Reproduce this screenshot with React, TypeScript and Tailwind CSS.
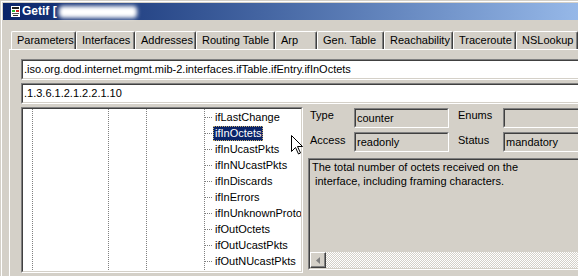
import React from 'react'

const TABS: { label: string; w: string }[] = [
  { label: 'Parameters', w: 'w-[65px]' },
  { label: 'Interfaces', w: 'w-[59px]' },
  { label: 'Addresses', w: 'w-[61px]' },
  { label: 'Routing Table', w: 'w-[79px]' },
  { label: 'Arp', w: 'w-[42px]' },
  { label: 'Gen. Table', w: 'w-[67px]' },
  { label: 'Reachability', w: 'w-[69px]' },
  { label: 'Traceroute', w: 'w-[63px]' },
  { label: 'NSLookup', w: 'w-[62px]' },
]

const NODES = [
  'ifLastChange',
  'ifInOctets',
  'ifInUcastPkts',
  'ifInNUcastPkts',
  'ifInDiscards',
  'ifInErrors',
  'ifInUnknownProtos',
  'ifOutOctets',
  'ifOutUcastPkts',
  'ifOutNUcastPkts',
]

const VDOTS = 'bg-[image:repeating-linear-gradient(to_bottom,#808080_0px_1px,transparent_1px_2px)] bg-[length:1px_100%] bg-no-repeat'

// sunken edit box, win2k style
function Sunken({ className = '', inner = '', children }: { className?: string; inner?: string; children?: React.ReactNode }) {
  return (
    <div className={`border border-[#808080] border-b-white border-r-white ${className}`}>
      <div className={`h-full border border-[#404040] border-b-[#d4d0c8] border-r-[#d4d0c8] ${inner}`}>{children}</div>
    </div>
  )
}

function AppIcon() {
  return (
    <svg width="9" height="11" viewBox="0 0 9 11" className="shrink-0">
      <rect x="0" y="0" width="9" height="11" fill="#fff" />
      <rect x="1" y="1" width="7" height="2" fill="#222" />
      <rect x="1" y="4" width="3" height="2" fill="#2db82d" />
      <rect x="5" y="4" width="3" height="2" fill="#d02020" />
      <rect x="1" y="7" width="7" height="1" fill="#555" />
      <rect x="2" y="9" width="5" height="1" fill="#333" />
    </svg>
  )
}

function Cursor() {
  return (
    <svg width="12" height="20" viewBox="0 0 12 20" className="absolute left-[291px] top-[135px]">
      <path d="M0.5 0.5 L0.5 16.5 L4.5 12.5 L7.5 19 L9.5 18 L6.5 11.5 L11.5 11.5 Z" fill="#fff" stroke="#000" strokeWidth="1" />
    </svg>
  )
}

export default function App() {
  return (
    <div className="relative h-[276px] w-[578px] overflow-hidden bg-[#d4d0c8] font-['Liberation_Sans',Arial,sans-serif] text-[11px] leading-[13px] text-black">
      <div className="h-full border-l border-t border-[#d4d0c8]">
        <div className="h-full border-l border-t border-white pl-px pt-px">

          {/* Title bar */}
          <div className="flex h-[17px] items-center bg-gradient-to-r from-[#0a246a] to-[#96b8e8] pl-[8px]">
            <AppIcon />
            <span className="ml-[2px] text-[12px] font-bold text-white">Getif [</span>
            <span className="ml-[2px] h-[12px] w-[78px] rounded-[4px] bg-white blur-[2px]" />
          </div>

          <div className="ml-[6px] mt-[11px]">
            {/* Tabs */}
            <div className="flex pl-[2px]">
              {TABS.map(tab => (
                <div key={tab.label}
                  className={`flex h-[18px] shrink-0 items-center rounded-t-[2px] border-l border-t border-white border-r border-r-[#404040] pl-[5px] shadow-[inset_-1px_0_0_#808080] whitespace-nowrap ${tab.w}`}>
                  {tab.label}
                </div>
              ))}
            </div>

            {/* Tab page */}
            <div className="h-[300px] border-l border-t border-white pl-[11px] pt-[9px]">
              <Sunken className="h-[21px] w-[600px]" inner="flex items-center bg-white">
                <span className="pl-px">.iso.org.dod.internet.mgmt.mib-2.interfaces.ifTable.ifEntry.ifInOctets</span>
              </Sunken>
              <Sunken className="mt-[3px] h-[21px] w-[600px]" inner="flex items-center bg-white">
                <span className="pl-px">.1.3.6.1.2.1.2.2.1.10</span>
              </Sunken>

              <div className="mt-[3px] flex">
                {/* MIB tree */}
                <Sunken className="h-[166px] w-[282px] shrink-0" inner="overflow-hidden bg-white">
                  <div className="flex h-full">
                    <div className="w-[9px] shrink-0" />
                    <div className={`w-[76px] shrink-0 ${VDOTS}`} />
                    <div className={`w-[38px] shrink-0 ${VDOTS}`} />
                    <div className={`w-[58px] shrink-0 ${VDOTS}`} />
                    <div className={`flex-1 ${VDOTS}`}>
                      {NODES.map(name => (
                        <div key={name} className="flex h-[16px] items-center whitespace-nowrap">
                          <span className="ml-px h-px w-[8px] shrink-0 bg-[image:repeating-linear-gradient(to_right,#808080_0px_1px,transparent_1px_2px)]" />
                          {name === 'ifInOctets' ? (
                            <span className="border border-dotted border-[#c8b070] bg-[#0a246a] px-px text-white">{name}</span>
                          ) : (
                            <span className="px-[2px]">{name}</span>
                          )}
                        </div>
                      ))}
                    </div>
                  </div>
                </Sunken>

                {/* Object details */}
                <div className="ml-[2px] flex-1">
                  <div className="mt-px flex items-start">
                    <span className="w-[49px] shrink-0 pl-[5px] pt-[1px]">Type</span>
                    <Sunken className="h-[20px] w-[95px] shrink-0" inner="flex items-center pl-px">counter</Sunken>
                    <span className="ml-[9px] w-[45px] shrink-0 pt-[1px]">Enums</span>
                    <Sunken className="h-[20px] w-[100px] shrink-0" inner="" />
                  </div>
                  <div className="mt-[4px] flex items-start">
                    <span className="w-[49px] shrink-0 pl-[5px] pt-[2px]">Access</span>
                    <Sunken className="h-[20px] w-[95px] shrink-0" inner="flex items-center pl-px">readonly</Sunken>
                    <span className="ml-[9px] w-[45px] shrink-0 pt-[2px]">Status</span>
                    <Sunken className="h-[20px] w-[100px] shrink-0" inner="flex items-center pl-px">mandatory</Sunken>
                  </div>

                  <Sunken className="ml-[3px] mt-[6px] h-[112px] w-[300px]" inner="flex flex-col">
                    <div className="flex-1 whitespace-pre pl-[2px] leading-[14px]">
                      {'The total number of octets received on the\n interface, including framing characters.'}
                    </div>
                    <div className="flex h-[16px]">
                      <div className="flex w-[16px] shrink-0 items-center justify-center border border-white border-b-[#404040] border-r-[#404040] shadow-[inset_-1px_-1px_0_#808080]">
                        <svg width="4" height="7" viewBox="0 0 4 7">
                          <path d="M4 0 L0 3.5 L4 7 Z" fill="#808080" />
                        </svg>
                      </div>
                      <div className="flex-1 bg-[image:repeating-conic-gradient(#d4d0c8_0%_25%,#ffffff_0%_50%)] bg-[length:2px_2px]" />
                    </div>
                  </Sunken>
                </div>
              </div>
            </div>
          </div>
        </div>
      </div>
      <Cursor />
    </div>
  )
}
